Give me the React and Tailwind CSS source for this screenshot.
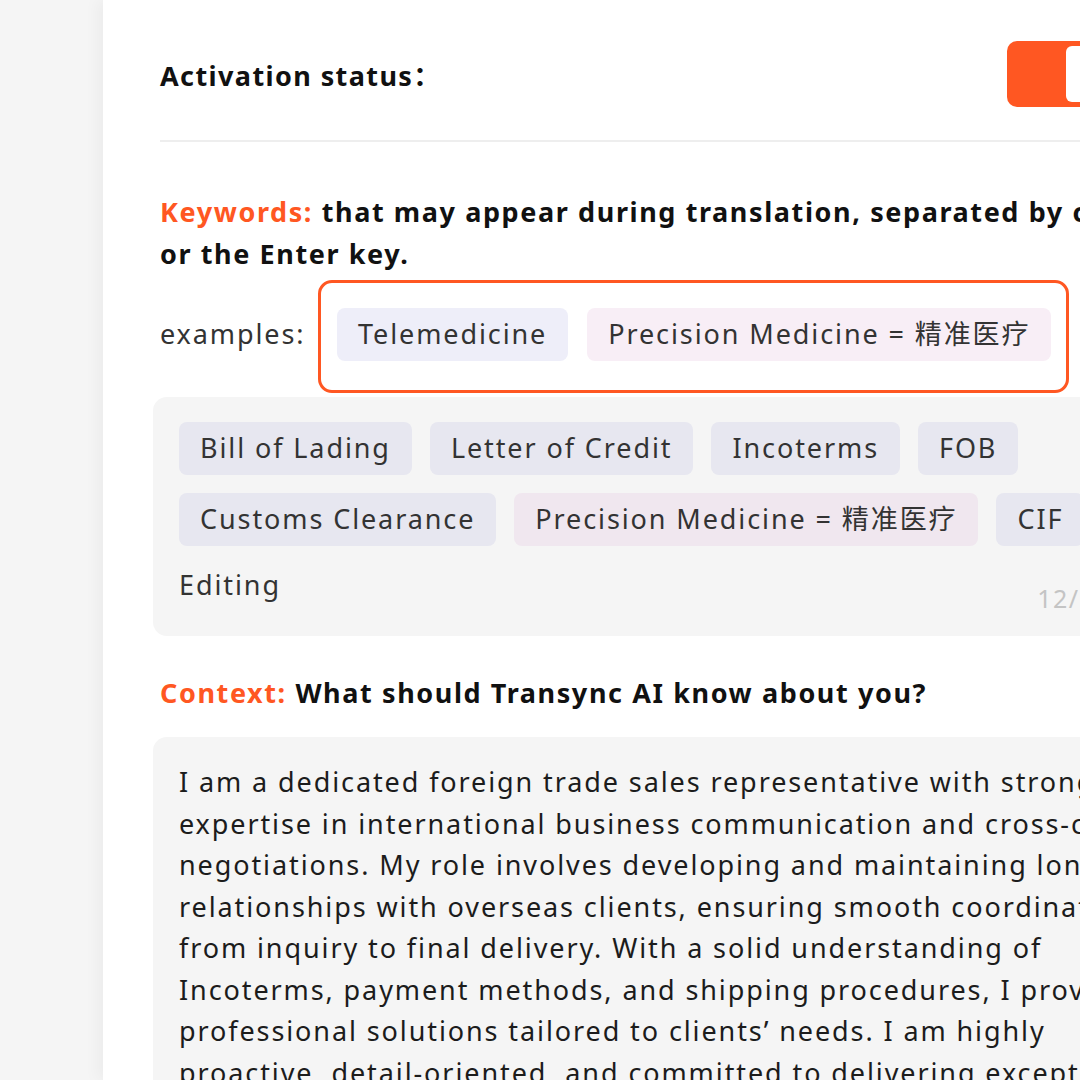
import React from 'react';

const font = { fontFamily: '"Noto Sans", "Noto Sans CJK SC", sans-serif' };

function Chip({ children, pink, dim }) {
  const bg = pink
    ? dim ? 'bg-[#f0e7ef]' : 'bg-[#f8eef6]'
    : dim ? 'bg-[#e7e7f0]' : 'bg-[#eeeef9]';
  return (
    <span className={`${bg} h-[53px] px-[21px] rounded-[8px] flex items-center whitespace-nowrap text-[27px] tracking-[1.9px] text-[#333]`}>
      {children}
    </span>
  );
}

const paragraph = [
  'I am a dedicated foreign trade sales representative with strong',
  'expertise in international business communication and cross-cultural',
  'negotiations. My role involves developing and maintaining long-term',
  'relationships with overseas clients, ensuring smooth coordination',
  'from inquiry to final delivery. With a solid understanding of',
  'Incoterms, payment methods, and shipping procedures, I provide',
  'professional solutions tailored to clients\u2019 needs. I am highly',
  'proactive, detail-oriented, and committed to delivering exceptional',
];

export default function App() {
  return (
    <div className="w-[1080px] h-[1080px] overflow-hidden flex bg-[#f5f5f5]" style={font}>
      <div className="w-[103px] shrink-0 bg-[#f5f5f5]" />
      <div className="shrink-0 w-[1100px] bg-white shadow-[-6px_0_14px_rgba(0,0,0,0.04)] pl-[57px] pt-[41px]">
        <div className="w-[967px]">
          {/* Activation status */}
          <div className="flex items-center justify-between h-[66px]">
            <span className="text-[27px] font-bold tracking-[1.4px] text-[#111] pt-[5px]">Activation status：</span>
            <div className="w-[120px] h-[66px] rounded-[10px] bg-[#ff5722] flex justify-end p-[5px]">
              <div className="w-[56px] h-[56px] rounded-[6px] bg-white" />
            </div>
          </div>

          <div className="h-[2px] bg-[#eeeeee] mt-[33px]" />

          {/* Keywords */}
          <div className="mt-[49px] text-[27px] leading-[42px] font-bold tracking-[1.6px] text-[#111] whitespace-nowrap">
            <span className="text-[#ff5722]">Keywords:</span> that may appear during translation, separated by commas
            <br />
            or the Enter key.
          </div>

          <div className="mt-[33px] flex items-center">
            <span className="text-[27px] tracking-[1.9px] text-[#333] w-[177px]">examples:</span>
            <div className="relative flex gap-[19px]">
              <div className="absolute -top-[28px] -left-[19px] -right-[18px] -bottom-[32px] border-[3px] border-[#ff5722] rounded-[14px]" />
              <Chip>Telemedicine</Chip>
              <Chip pink>Precision Medicine = 精准医疗</Chip>
            </div>
          </div>

          {/* Keyword input box */}
          <div className="mt-[36px] -ml-[7px] bg-[#f5f5f5] rounded-[14px] pt-[25px] pl-[26px] pb-[31px]">
            <div className="flex flex-col gap-[18px]">
              <div className="flex gap-[18px]">
                <Chip dim>Bill of Lading</Chip>
                <Chip dim>Letter of Credit</Chip>
                <Chip dim>Incoterms</Chip>
                <Chip dim>FOB</Chip>
              </div>
              <div className="flex gap-[18px]">
                <Chip dim>Customs Clearance</Chip>
                <Chip dim pink>Precision Medicine = 精准医疗</Chip>
                <Chip dim>CIF</Chip>
              </div>
            </div>
            <div className="flex justify-between items-end h-[40px] mt-[19px]">
              <span className="text-[27px] leading-[40px] tracking-[1.9px] text-[#333]">Editing</span>
              <span className="text-[25px] tracking-[1.5px] text-[#c4c4c4] leading-[30px] -mb-[8px]">12/200</span>
            </div>
          </div>

          {/* Context */}
          <div className="mt-[36px] text-[27px] leading-[42px] font-bold tracking-[1.6px] text-[#111] whitespace-nowrap">
            <span className="text-[#ff5722]">Context:</span> What should Transync AI know about you?
          </div>

          <div className="mt-[23px] -ml-[7px] bg-[#f5f5f5] rounded-[14px] pt-[24px] pl-[26px] pb-[30px]">
            {paragraph.map((line, i) => (
              <div key={i} className="text-[27px] leading-[41.5px] tracking-[1.9px] text-[#1c1c1c] whitespace-nowrap">
                {line}
              </div>
            ))}
          </div>
        </div>
      </div>
    </div>
  );
}
